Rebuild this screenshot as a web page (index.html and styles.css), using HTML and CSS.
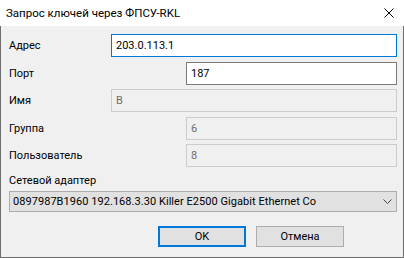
FILE: index.html
```html
<!DOCTYPE html>
<html lang="ru">
<head>
<meta charset="utf-8">
<title>Запрос ключей через ФПСУ-RKL</title>
<link rel="stylesheet" href="styles.css">
</head>
<body>
<div class="window">
  <div class="titlebar">
    <span class="title">Запрос ключей через ФПСУ-RKL</span>
    <svg class="close" width="10" height="10" viewBox="0 0 10 10"><path d="M0.5 0.5L9.5 9.5M9.5 0.5L0.5 9.5" stroke="#000" stroke-width="1" fill="none"/></svg>
  </div>
  <div class="client">
    <div class="form">
      <div class="row"><label class="lbl">Адрес</label><input class="edit wide focus" type="text" value="203.0.113.1"></div>
      <div class="row"><label class="lbl">Порт</label><input class="edit narrow" type="text" value="187"></div>
      <div class="row"><label class="lbl">Имя</label><input class="edit wide" type="text" value="В" disabled></div>
      <div class="row"><label class="lbl">Группа</label><input class="edit narrow" type="text" value="6" disabled></div>
      <div class="row"><label class="lbl">Пользователь</label><input class="edit narrow" type="text" value="8" disabled></div>
    </div>
    <div class="adapter-label">Сетевой адаптер</div>
    <div class="combo">
      <span class="combo-text">0897987B1960 192.168.3.30 Killer E2500 Gigabit Ethernet Co</span>
      <svg class="chev" width="9" height="5" viewBox="0 0 9 5"><path d="M0.5 0.5L4.5 4.5L8.5 0.5" stroke="#444" stroke-width="1" fill="none"/></svg>
    </div>
    <div class="buttons">
      <button class="btn default" type="button">OK</button>
      <button class="btn" type="button">Отмена</button>
    </div>
  </div>
</div>
</body>
</html>
```
FILE: styles.css
```css
* { box-sizing: border-box; margin: 0; padding: 0; }
html, body { width: 404px; height: 258px; overflow: hidden; }
body { font-family: Roboto, "Noto Sans", sans-serif; font-size: 11px; color: #000; background: #f0f0f0; }
.window { width: 404px; height: 258px; display: flex; flex-direction: column; }
.titlebar { height: 26px; flex: none; background: #fff; display: flex; align-items: center; padding-left: 6px; }
.title { flex: 1; font-size: 11.5px; line-height: 16px; }
.close { margin-right: 10px; flex: none; }
.client { flex: 1; background: #f0f0f0; border: 1px solid #6d6d6d; border-top: 0; padding: 8px 6px 0 8px; display: flex; flex-direction: column; }
.form { display: flex; flex-direction: column; gap: 4.5px; }
.row { display: flex; align-items: center; height: 23px; }
.lbl { flex: 1; }
.edit { height: 23px; border: 1px solid #7a7a7a; background: #fff; padding: 0 4px; font: inherit; color: #000; outline: none; }
.edit.focus { border-color: #0078d7; }
.edit.wide { width: 286px; }
.edit.narrow { width: 211px; }
.edit:disabled { background: #f0f0f0; border-color: #cccccc; color: #6d6d6d; -webkit-text-fill-color: #6d6d6d; opacity: 1; }
.adapter-label { margin-top: 6px; line-height: 16px; }
.combo { margin-top: 2px; height: 21px; border: 1px solid #adadad; background: #e1e1e1; display: flex; align-items: center; padding: 0 4px 0 3px; }
.combo-text { flex: 1; white-space: nowrap; overflow: hidden; letter-spacing: 0.05px; }
.chev { flex: none; }
.buttons { margin-top: 14px; display: flex; gap: 10px; padding-left: 149px; }
.btn { width: 88px; height: 21px; border: 1px solid #adadad; background: #e1e1e1; font: inherit; color: #000; }
.btn.default { border: 2px solid #0078d7; }
```
